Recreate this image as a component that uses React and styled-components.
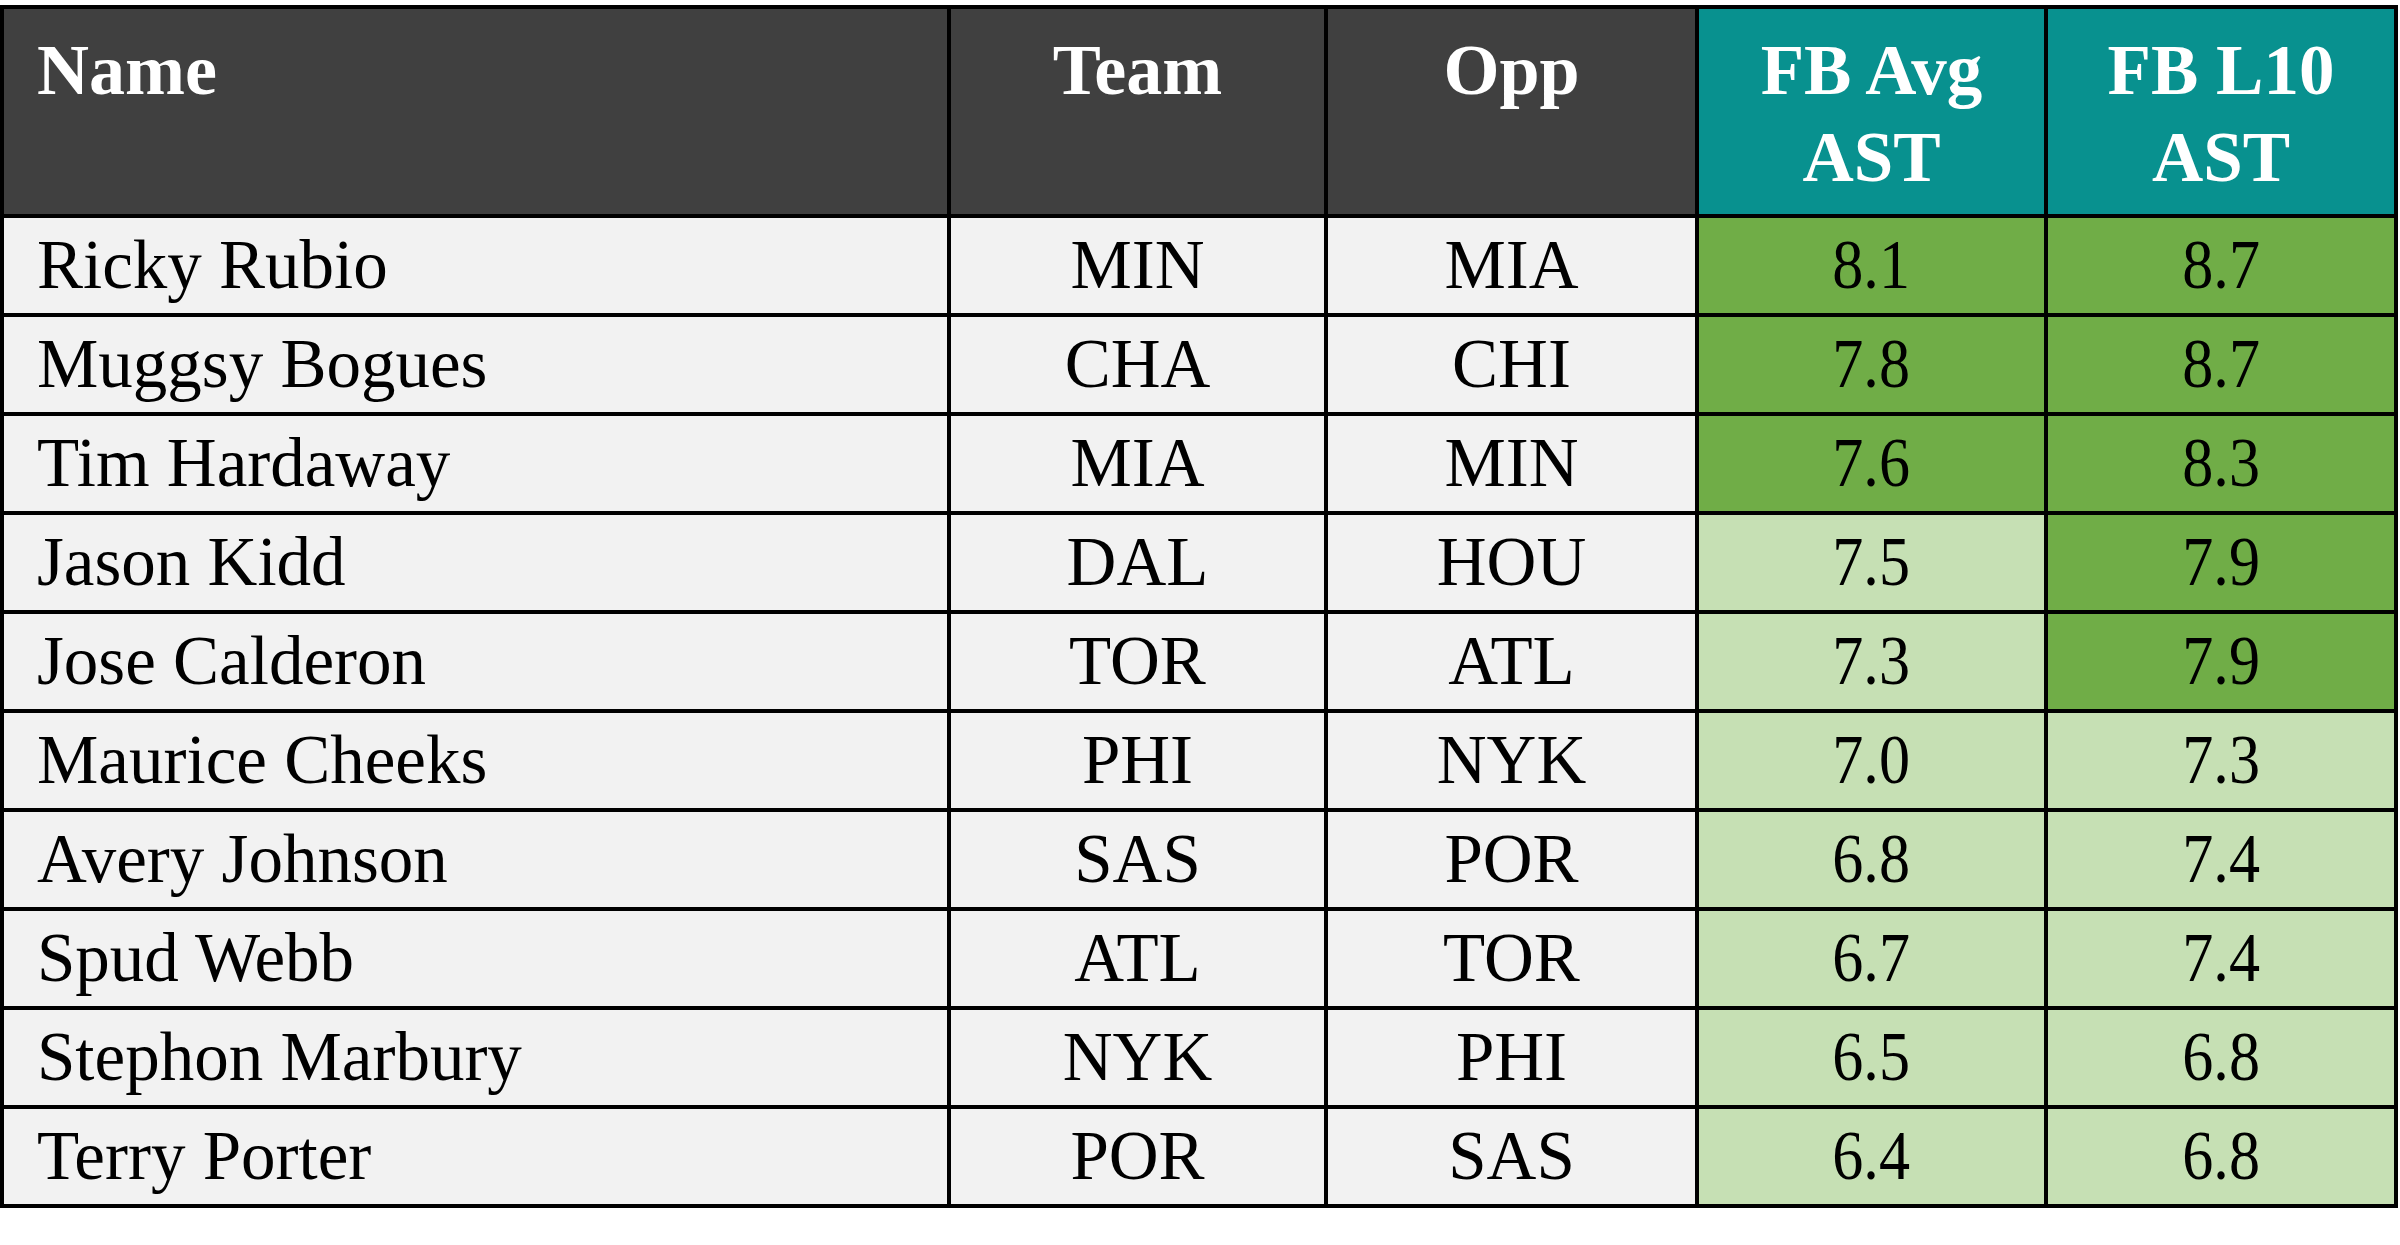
import React from "react";
import styled, { createGlobalStyle } from "styled-components";

const Global = createGlobalStyle`
  html, body { margin: 0; padding: 0; background: #ffffff; }
  body { font-family: "Liberation Serif", "Times New Roman", serif; }
`;

const Page = styled.div`
  padding-top: 5px;
`;

const Table = styled.table`
  width: 2398px;
  table-layout: fixed;
  border-collapse: separate;
  border-spacing: 4px;
  background: #000000;
  font-family: "Liberation Serif", "Times New Roman", serif;
`;

const HeadCell = styled.th`
  box-sizing: border-box;
  height: 205px;
  padding: 18px 0 0 ${(p) => (p.$left ? "33px" : "0")};
  vertical-align: top;
  text-align: ${(p) => (p.$left ? "left" : "center")};
  background: ${(p) => (p.$accent ? "#08918f" : "#404040")};
  color: #ffffff;
  font-size: ${(p) => (p.$accent ? "71px" : "72px")};
  line-height: 87px;
  font-weight: 700;
  white-space: nowrap;
`;

const Cell = styled.td`
  box-sizing: border-box;
  height: 95px;
  padding: 0 0 2px ${(p) => (p.$left ? "33px" : "0")};
  vertical-align: middle;
  text-align: ${(p) => (p.$left ? "left" : "center")};
  background: ${(p) =>
    p.$tone === "dark" ? "#70ad47" : p.$tone === "light" ? "#c6e0b4" : "#f2f2f2"};
  color: #000000;
  font-size: 69px;
  line-height: 78px;
  white-space: nowrap;
  overflow: hidden;
`;

const Num = styled.span`
  display: inline-block;
  transform: scaleX(0.9);
`;

const rows = [
  ["Ricky Rubio", "MIN", "MIA", "8.1", "8.7", "dark", "dark"],
  ["Muggsy Bogues", "CHA", "CHI", "7.8", "8.7", "dark", "dark"],
  ["Tim Hardaway", "MIA", "MIN", "7.6", "8.3", "dark", "dark"],
  ["Jason Kidd", "DAL", "HOU", "7.5", "7.9", "light", "dark"],
  ["Jose Calderon", "TOR", "ATL", "7.3", "7.9", "light", "dark"],
  ["Maurice Cheeks", "PHI", "NYK", "7.0", "7.3", "light", "light"],
  ["Avery Johnson", "SAS", "POR", "6.8", "7.4", "light", "light"],
  ["Spud Webb", "ATL", "TOR", "6.7", "7.4", "light", "light"],
  ["Stephon Marbury", "NYK", "PHI", "6.5", "6.8", "light", "light"],
  ["Terry Porter", "POR", "SAS", "6.4", "6.8", "light", "light"],
];

export default function App() {
  return (
    <Page>
      <Global />
      <Table>
        <colgroup>
          <col style={{ width: 943 }} />
          <col style={{ width: 373 }} />
          <col style={{ width: 367 }} />
          <col style={{ width: 345 }} />
          <col style={{ width: 346 }} />
        </colgroup>
        <thead>
          <tr>
            <HeadCell $left>Name</HeadCell>
            <HeadCell>Team</HeadCell>
            <HeadCell>Opp</HeadCell>
            <HeadCell $accent>
              FB Avg
              <br />
              AST
            </HeadCell>
            <HeadCell $accent>
              FB L10
              <br />
              AST
            </HeadCell>
          </tr>
        </thead>
        <tbody>
          {rows.map(([name, team, opp, avg, l10, t1, t2]) => (
            <tr key={name}>
              <Cell $left>{name}</Cell>
              <Cell>{team}</Cell>
              <Cell>{opp}</Cell>
              <Cell $tone={t1}>
                <Num>{avg}</Num>
              </Cell>
              <Cell $tone={t2}>
                <Num>{l10}</Num>
              </Cell>
            </tr>
          ))}
        </tbody>
      </Table>
    </Page>
  );
}
